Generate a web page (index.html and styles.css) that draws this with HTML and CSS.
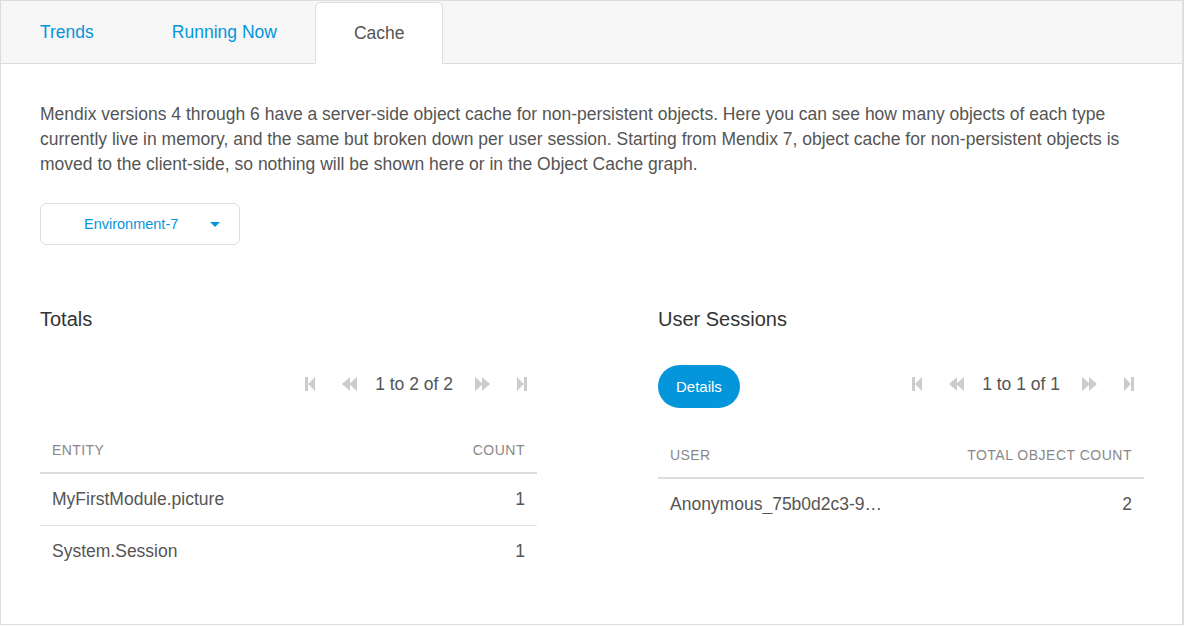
FILE: index.html
```html
<!DOCTYPE html>
<html>
<head>
<meta charset="utf-8">
<link rel="stylesheet" href="styles.css">
</head>
<body>
<div class="app">
  <nav class="tabbar">
    <a class="tab">Trends</a>
    <a class="tab">Running Now</a>
    <a class="tab active">Cache</a>
  </nav>
  <main class="panel">
    <p class="intro">Mendix versions 4 through 6 have a server-side object cache for non-persistent objects. Here you can see how many objects of each type currently live in memory, and the same but broken down per user session. Starting from Mendix 7, object cache for non-persistent objects is moved to the client-side, so nothing will be shown here or in the Object Cache graph.</p>
    <div class="select">
      <span class="select-label">Environment-7</span>
      <span class="caret"></span>
    </div>
    <div class="columns">
      <section class="col">
        <h3 class="col-title">Totals</h3>
        <div class="toolbar">
          <div class="pager">
            <svg class="pico first" viewBox="0 0 10 14"><rect x="0" y="0" width="3" height="14"/><path d="M10 0 L3 7 L10 14 Z"/></svg>
            <svg class="pico dbl prev" viewBox="0 0 15 14"><path d="M8 0 L0 7 L8 14 Z M15 0 L7 7 L15 14 Z"/></svg>
            <span class="pager-text">1 to 2 of 2</span>
            <svg class="pico dbl next" viewBox="0 0 15 14"><path d="M0 0 L8 7 L0 14 Z M7 0 L15 7 L7 14 Z"/></svg>
            <svg class="pico last" viewBox="0 0 10 14"><path d="M0 0 L7 7 L0 14 Z"/><rect x="7" y="0" width="3" height="14"/></svg>
          </div>
        </div>
        <table class="grid">
          <thead><tr><th>Entity</th><th class="num">Count</th></tr></thead>
          <tbody>
            <tr><td>MyFirstModule.picture</td><td class="num">1</td></tr>
            <tr><td>System.Session</td><td class="num">1</td></tr>
          </tbody>
        </table>
      </section>
      <section class="col">
        <h3 class="col-title">User Sessions</h3>
        <div class="toolbar">
          <button class="btn">Details</button>
          <div class="pager">
            <svg class="pico first" viewBox="0 0 10 14"><rect x="0" y="0" width="3" height="14"/><path d="M10 0 L3 7 L10 14 Z"/></svg>
            <svg class="pico dbl prev" viewBox="0 0 15 14"><path d="M8 0 L0 7 L8 14 Z M15 0 L7 7 L15 14 Z"/></svg>
            <span class="pager-text">1 to 1 of 1</span>
            <svg class="pico dbl next" viewBox="0 0 15 14"><path d="M0 0 L8 7 L0 14 Z M7 0 L15 7 L7 14 Z"/></svg>
            <svg class="pico last" viewBox="0 0 10 14"><path d="M0 0 L7 7 L0 14 Z"/><rect x="7" y="0" width="3" height="14"/></svg>
          </div>
        </div>
        <table class="grid">
          <thead><tr><th>User</th><th class="num">Total Object Count</th></tr></thead>
          <tbody>
            <tr><td><span class="trunc">Anonymous_75b0d2c3-9f4e-4c1a</span></td><td class="num">2</td></tr>
          </tbody>
        </table>
      </section>
    </div>
  </main>
</div>
</body>
</html>
```
FILE: styles.css
```css
html, body {
  margin: 0;
  padding: 0;
  background: #fff;
}
body {
  font-family: "Liberation Sans", Arial, sans-serif;
  color: #555;
}
.app {
  width: 1184px;
  height: 625px;
  box-sizing: border-box;
  border: 1px solid #ddd;
  border-right-width: 2px;
  display: flex;
  flex-direction: column;
  overflow: hidden;
}
.tabbar {
  display: flex;
  height: 63px;
  box-sizing: border-box;
  padding-top: 1px;
  background: #f7f7f7;
  border-bottom: 1px solid #ddd;
}
.tab {
  display: flex;
  align-items: center;
  padding: 0 39px;
  font-size: 17.5px;
  color: #0595db;
  cursor: pointer;
}
.tab.active {
  margin-left: -1px;
  background: #fff;
  color: #555;
  border: 1px solid #ddd;
  border-bottom-color: #fff;
  border-radius: 5px 5px 0 0;
  margin-bottom: -1px;
  padding: 0 38px;
}
.panel {
  flex: 1;
  padding: 38px 38px 0 39px;
}
.intro {
  margin: 0;
  font-size: 17.5px;
  line-height: 25px;
  color: #555;
}
.select {
  margin-top: 26px;
  width: 200px;
  height: 42px;
  box-sizing: border-box;
  border: 1px solid #ddd;
  border-radius: 6px;
  display: flex;
  align-items: center;
  padding-left: 43px;
}
.select-label {
  font-size: 14.5px;
  color: #0595db;
}
.caret {
  margin-left: 32px;
  width: 0;
  height: 0;
  border-left: 5px solid transparent;
  border-right: 5px solid transparent;
  border-top: 5px solid #0595db;
}
.columns {
  margin-top: 61px;
  display: grid;
  grid-template-columns: 497px 486px;
  column-gap: 121px;
}
.col-title {
  margin: 0 0 33px;
  font-size: 20px;
  line-height: 26px;
  font-weight: normal;
  color: #333;
}
.toolbar {
  display: flex;
  align-items: flex-start;
  justify-content: space-between;
  min-height: 38px;
  margin-bottom: 21px;
}
.toolbar .pager {
  margin-left: auto;
}
.pager {
  display: flex;
  align-items: center;
  height: 38px;
  padding-right: 10px;
}
.pico {
  width: 10px;
  height: 14px;
  fill: #ccc;
}
.pico.dbl {
  width: 15px;
}
.pico.prev {
  margin-left: 27px;
}
.pico.last {
  margin-left: 27px;
}
.pager-text {
  font-size: 17.5px;
  color: #555;
  margin: 0 22px 0 18px;
}
.btn {
  height: 43px;
  padding: 0 18px;
  border: none;
  border-radius: 22px;
  background: #0595db;
  color: #fff;
  font-family: inherit;
  font-size: 15px;
}
.grid {
  width: 100%;
  border-collapse: collapse;
}
.grid th {
  text-align: left;
  font-weight: normal;
  text-transform: uppercase;
  font-size: 14px;
  letter-spacing: 0.4px;
  line-height: 20px;
  color: #888;
  padding: 16px 12px 12px;
  border-bottom: 2px solid #ddd;
}
.grid th.num {
  letter-spacing: 0.5px;
}
.grid td {
  font-size: 17.5px;
  line-height: 20px;
  color: #555;
  padding: 15px 12px 16px;
  border-bottom: 1px solid #e3e3e3;
}
.grid tbody tr:last-child td {
  border-bottom: none;
}
.grid .num {
  text-align: right;
}
.trunc {
  display: inline-block;
  max-width: 213px;
  overflow: hidden;
  white-space: nowrap;
  text-overflow: ellipsis;
  vertical-align: top;
}
```
